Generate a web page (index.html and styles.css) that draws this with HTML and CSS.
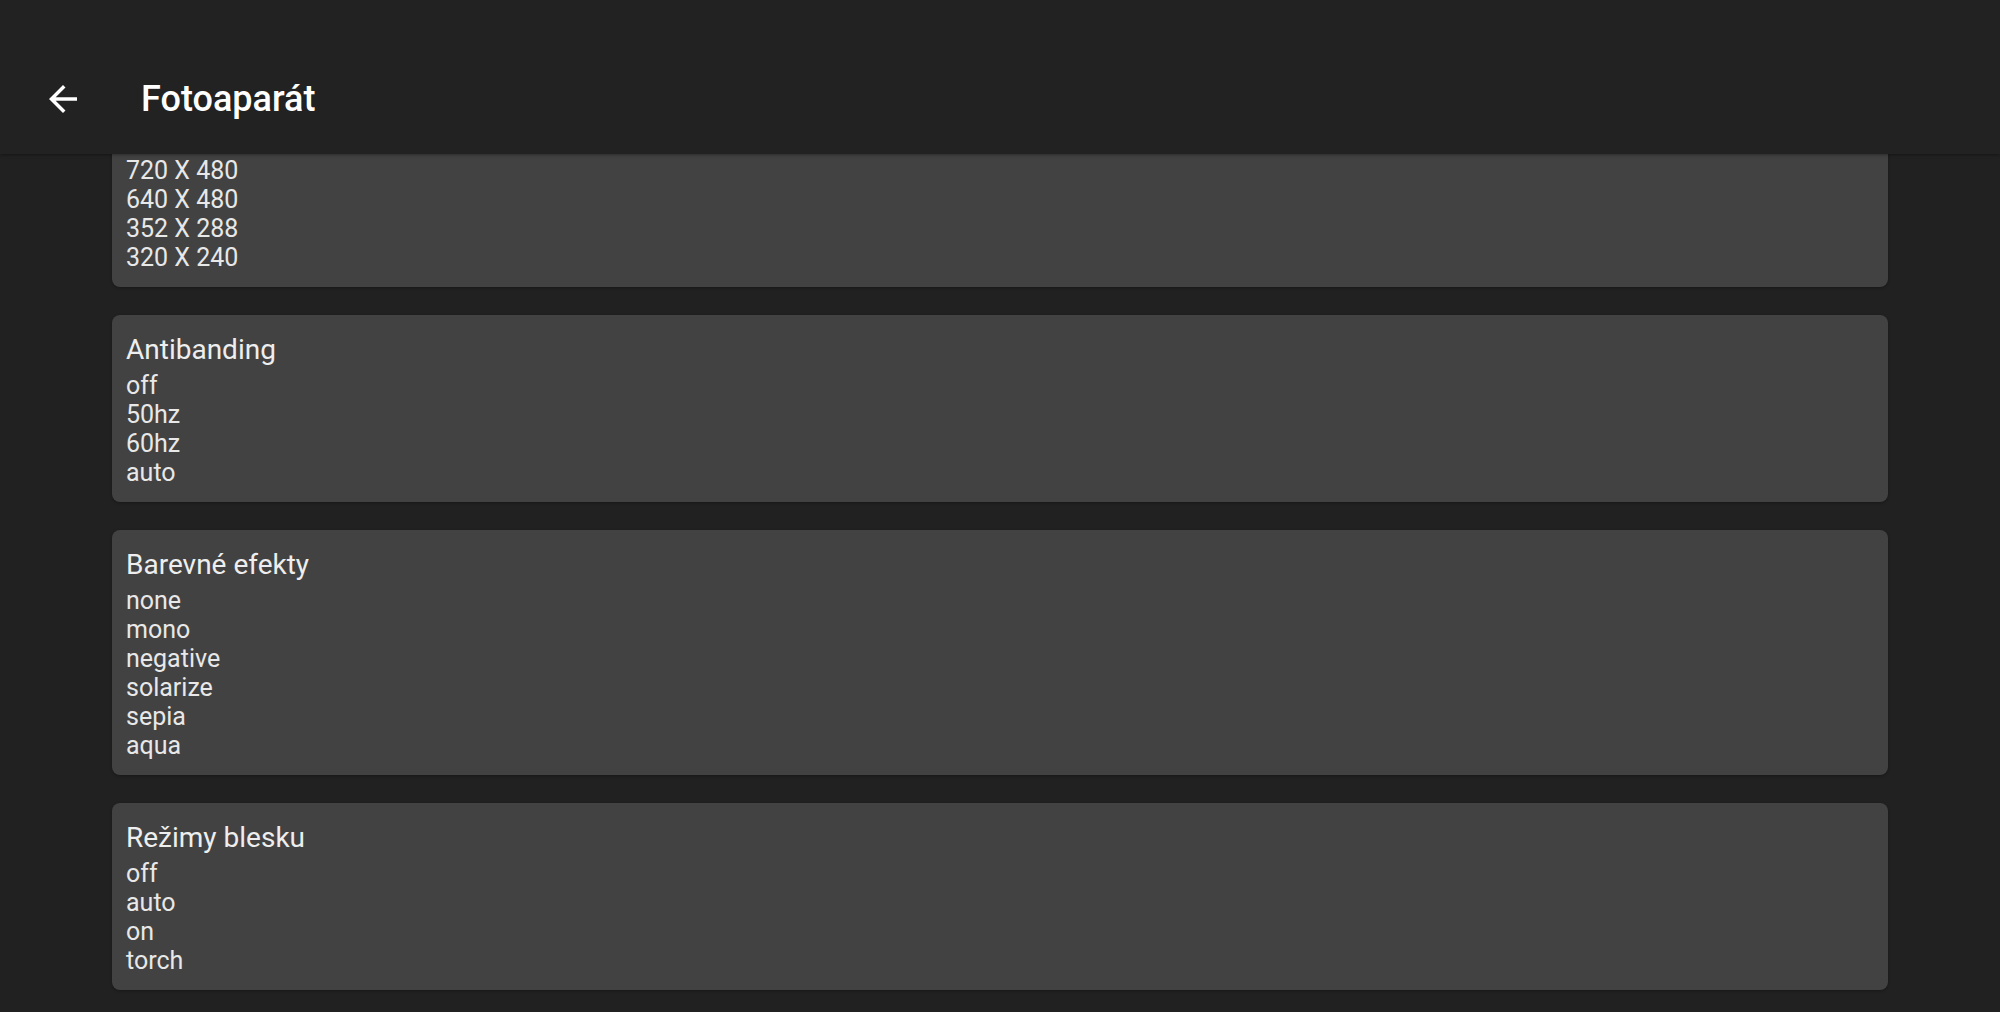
FILE: index.html
```html
<!DOCTYPE html>
<html lang="cs">
<head>
<meta charset="utf-8">
<title>Fotoaparát</title>
<link rel="stylesheet" href="styles.css">
</head>
<body>
<div class="app">
  <header class="toolbar">
    <button class="back" aria-label="Zpět">
      <svg viewBox="0 0 24 24" width="42" height="42"><path fill="#ffffff" d="M20 11H7.83l5.59-5.59L12 4l-8 8 8 8 1.41-1.41L7.83 13H20v-2z"/></svg>
    </button>
    <h1 class="title">Fotoaparát</h1>
  </header>
  <main class="scroller">
    <div class="list">
      <section class="card card-partial">
        <ul class="items">
          <li>720 X 480</li>
          <li>640 X 480</li>
          <li>352 X 288</li>
          <li>320 X 240</li>
        </ul>
      </section>
      <section class="card">
        <h2 class="card-title">Antibanding</h2>
        <ul class="items">
          <li>off</li>
          <li>50hz</li>
          <li>60hz</li>
          <li>auto</li>
        </ul>
      </section>
      <section class="card">
        <h2 class="card-title">Barevné efekty</h2>
        <ul class="items">
          <li>none</li>
          <li>mono</li>
          <li>negative</li>
          <li>solarize</li>
          <li>sepia</li>
          <li>aqua</li>
        </ul>
      </section>
      <section class="card">
        <h2 class="card-title">Režimy blesku</h2>
        <ul class="items">
          <li>off</li>
          <li>auto</li>
          <li>on</li>
          <li>torch</li>
        </ul>
      </section>
    </div>
  </main>
</div>
</body>
</html>
```
FILE: styles.css
```css
* { box-sizing: border-box; }
html, body {
  margin: 0;
  padding: 0;
  height: 100%;
  background: #212121;
  font-family: Roboto, "Noto Sans", "Liberation Sans", sans-serif;
}
.app {
  display: flex;
  flex-direction: column;
  height: 1012px;
  overflow: hidden;
}
.toolbar {
  flex: 0 0 154px;
  height: 154px;
  padding: 44px 0 0 42px;
  display: flex;
  align-items: center;
  background: #222222;
  box-shadow: 0 1px 3px rgba(0, 0, 0, 0.35);
  position: relative;
  z-index: 2;
}
.back {
  width: 42px;
  height: 42px;
  padding: 0;
  border: 0;
  background: none;
  display: flex;
}
.title {
  margin: 0 0 0 57px;
  font-size: 36px;
  font-weight: 500;
  line-height: 42px;
  color: #ffffff;
}
.scroller {
  flex: 1;
  overflow: hidden;
}
.list {
  padding: 0 112px;
  display: flex;
  flex-direction: column;
  gap: 28px;
}
.card {
  background: #424242;
  border-radius: 8px;
  padding: 18px 14px 15px;
  box-shadow: 0 1px 3px rgba(0, 0, 0, 0.3);
}
.card-partial {
  margin-top: -10px;
  padding-top: 12px;
}
.card-title {
  margin: 0 0 4px;
  font-size: 28px;
  font-weight: 400;
  line-height: 34px;
  color: #eeeeee;
}
.items {
  list-style: none;
  margin: 0;
  padding: 0;
  font-size: 25px;
  line-height: 29px;
  color: #e8e8e8;
}
```
